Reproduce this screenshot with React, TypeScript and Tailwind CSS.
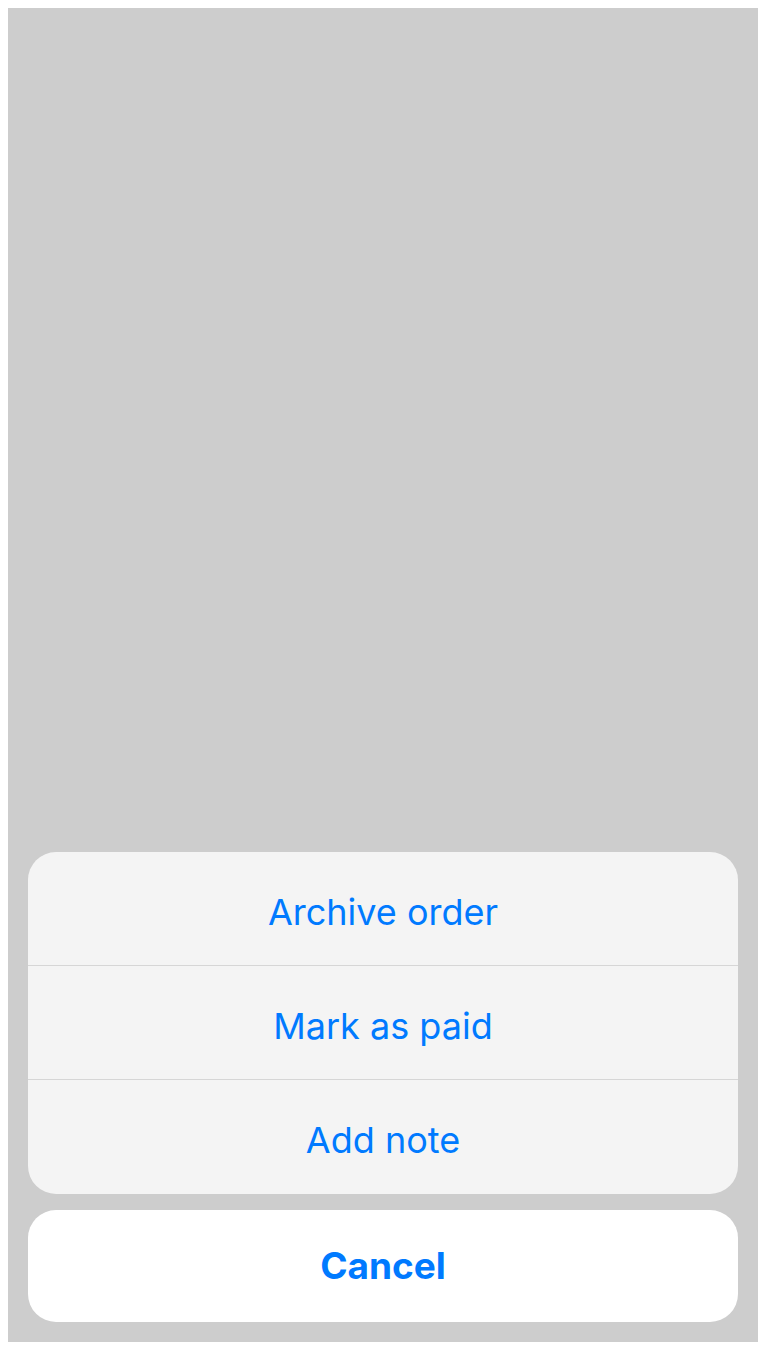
export default function App() {
  const items = ["Archive order", "Mark as paid", "Add note"];
  return (
    <div className="w-[766px] h-[1350px] bg-white p-2" style={{ fontFamily: "Inter, 'Noto Sans', sans-serif" }}>
      <div className="h-full bg-[#cdcdcd] flex flex-col justify-end px-5 pb-5">
        <div className="bg-[#f4f4f4] rounded-[28px] overflow-hidden flex flex-col">
          {items.map((t, i) => (
            <div
              key={t}
              className={`h-[114px] flex items-center justify-center text-[#007aff] text-[36px] pt-[6px] ${i < 2 ? "border-b border-[#d6d6d6]" : ""}`}
            >
              {t}
            </div>
          ))}
        </div>
        <div className="mt-4 bg-white rounded-[28px] h-[112px] flex items-center justify-center text-[#007aff] text-[37px] font-bold">
          Cancel
        </div>
      </div>
    </div>
  );
}
